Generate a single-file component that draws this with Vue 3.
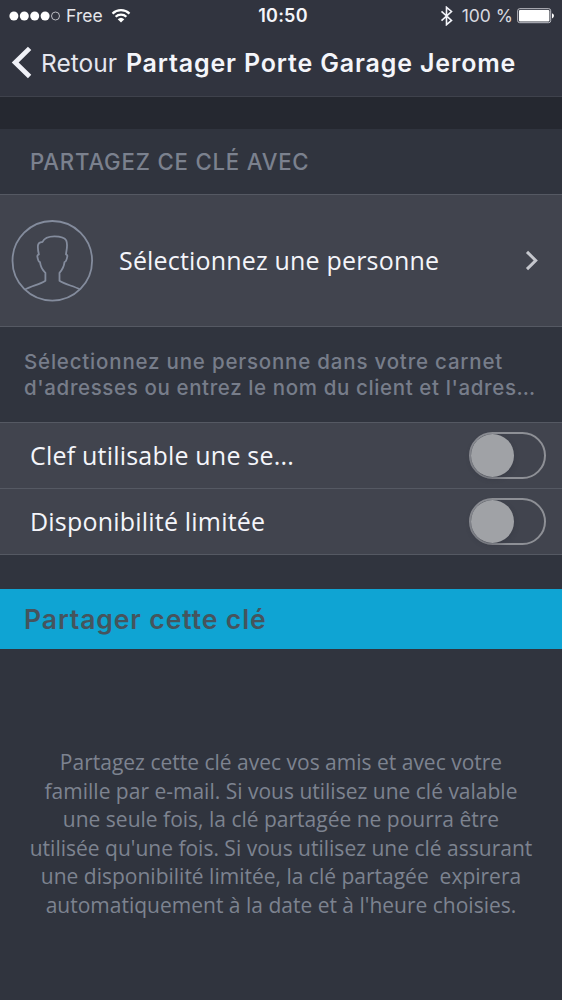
<script setup>
import { ref } from 'vue'

const dots = [true, true, true, true, false]
const options = ref([
  { label: 'Clef utilisable une se...', cls: 'first', on: false },
  { label: 'Disponibilité limitée', cls: 'second', on: false },
])
const infoLines = [
  'Partagez cette clé avec vos amis et avec votre',
  'famille par e-mail. Si vous utilisez une clé valable',
  'une seule fois, la clé partagée ne pourra être',
  "utilisée qu'une fois. Si vous utilisez une clé assurant",
  'une disponibilité limitée, la clé partagée\u00a0 expirera',
  "automatiquement à la date et à l'heure choisies.",
]
</script>

<template>
  <main class="screen">
    <header class="top">
      <div class="status">
        <div class="carrier">
          <svg class="signal" width="52" height="12" viewBox="0 0 52 12">
            <circle v-for="(full, i) in dots" :key="i" :cx="4.9 + i * 10.4" cy="6" :r="full ? 4.5 : 4" :class="full ? 'dot' : 'ring'" />
          </svg>
          <span class="network">Free</span>
          <svg class="wifi" width="20" height="16" viewBox="0 0 20 16">
            <path d="M1.5 5.6a12.3 12.3 0 0 1 17 0M4.6 8.7a7.8 7.8 0 0 1 10.8 0" />
            <path class="wedge" d="M6.7 11.2a4.9 4.9 0 0 1 6.6 0L10 14.6z" />
          </svg>
        </div>
        <span class="clock">10:50</span>
        <div class="power">
          <svg class="bluetooth" width="14" height="20" viewBox="0 0 14 20">
            <path d="M1.5 5.3l10 9.1-5 4.3V1.3l5 4.2-10 9.2" />
          </svg>
          <span class="percent">100 %</span>
          <svg class="battery" width="38" height="16" viewBox="0 0 38 16">
            <rect class="case" x=".7" y=".7" width="33" height="14" rx="2" />
            <rect class="charge" x="2" y="2" width="30.4" height="11.4" rx="1" />
            <path class="charge" d="M35 5.2q2 .8 2 2.6t-2 2.6z" />
          </svg>
        </div>
      </div>
      <nav class="nav">
        <svg class="back-icon" width="21" height="34" viewBox="0 0 21 34">
          <path d="M18.6 2.4L4.2 16.6l14.4 13.8" />
        </svg>
        <span class="back">Retour</span>
        <h1 class="title">Partager Porte Garage Jerome</h1>
      </nav>
    </header>
    <div class="band"></div>
    <h2 class="section">PARTAGEZ CE CLÉ AVEC</h2>
    <div class="person">
      <svg class="avatar" width="82" height="82" viewBox="0 0 82 82">
        <circle cx="41.3" cy="40.8" r="39.8" />
        <path d="M14.4 69.3C20 66 29.5 64.3 34.4 60.8V52.8C31.6 50.3 29.5 46.8 29 42.2C27.6 41.8 26.8 39.5 26.4 36.9C26.1 35.4 26.7 34.7 27.9 34.4C27 31 26.6 28.3 27 25.2C27.5 22.4 29.4 22.6 31.5 21.9C33.5 17.5 38.2 16.3 43.5 16.3C49.7 16.3 53.6 17.3 55.2 20.4C57.2 25 55.4 29.8 55 34.4C56.1 34.8 56.6 35.6 56.2 36.9C55.7 39.5 54.9 41.8 53.5 42.2C53 46.8 50.9 50.3 48.5 52.8V60.8C53.4 64.3 62.8 66 68.8 69.3" />
      </svg>
      <span class="person-label">Sélectionnez une personne</span>
      <svg class="chevron" width="14" height="22" viewBox="0 0 14 22">
        <path d="M2 1.9l8.7 8.6L2 19.1" />
      </svg>
    </div>
    <div class="note">
      <div class="note-a">Sélectionnez une personne dans votre carnet</div>
      <div class="note-b">d'adresses ou entrez le nom du client et l'adres…</div>
    </div>
    <div v-for="option in options" :key="option.cls" class="option">
      <span class="option-label" :class="option.cls">{{ option.label }}</span>
      <button class="toggle" :class="{ on: option.on }" :aria-label="option.label" @click="option.on = !option.on">
        <span class="knob"></span>
      </button>
    </div>
    <button class="share"><span>Partager cette clé</span></button>
    <div class="info">
      <div v-for="line in infoLines" :key="line">{{ line }}</div>
    </div>
  </main>
</template>

<style>
html, body { background: #30343e; }
</style>

<style scoped>
* { box-sizing: border-box; }
.screen {
  width: 562px;
  height: 1000px;
  overflow: hidden;
  background: #30343e;
  font-family: "Open Sans", "Noto Sans", sans-serif;
  color: #f4f5fa;
}
svg { flex: none; fill: none; display: block; }
span, h1 { white-space: nowrap; }
.top { height: 97px; background: #31343f; border-bottom: 1px solid #3f424c; }
.status {
  height: 31px;
  display: grid;
  grid-template-columns: 1fr auto 1fr;
  align-items: center;
  padding: 0 8px 0 9px;
  font-family: Inter, sans-serif;
}
.carrier, .power { display: flex; align-items: center; }
.power { justify-content: flex-end; }
.dot { fill: #fff; }
.ring { stroke: #c9cbd1; stroke-width: .9; }
.network { font-size: 17.5px; margin-left: 5px; color: #e4e5ea; letter-spacing: .1px; }
.wifi { margin-left: 8px; }
.wifi path { stroke: #fff; stroke-width: 2.2; }
.wifi .wedge { fill: #fff; stroke: none; }
.clock { font-size: 18px; font-weight: 600; letter-spacing: .2px; padding-left: 3px; }
.bluetooth { margin-right: 8px; }
.bluetooth path { stroke: #f4f5fa; stroke-width: 1.6; }
.percent { font-size: 17.5px; margin-right: 4px; color: #d9dae0; }
.battery { margin-right: -1px; }
.case { stroke: #bfc1c7; stroke-width: 1; }
.charge { fill: #fff; }
.nav { display: flex; align-items: center; height: 65px; padding: 0 0 2px 11px; }
.back-icon path { stroke: #f0f1f7; stroke-width: 4.8; }
.back { font-family: Inter, sans-serif; font-size: 24.5px; margin-left: 9px; color: #e6e7ef; }
.title { font-family: Inter, sans-serif; font-size: 25px; font-weight: 600; margin: 0 0 0 9px; letter-spacing: .84px; }
.band { height: 32px; background: #252830; }
.section {
  height: 65px;
  line-height: 66px;
  margin: 0;
  padding-left: 30px;
  font-family: Inter, sans-serif;
  font-size: 22.2px;
  font-weight: 500;
  letter-spacing: .8px;
  color: #7b818e;
}
.person {
  height: 133px;
  display: flex;
  align-items: center;
  padding: 0 23px 0 11px;
  background: #41444e;
  border-top: 1px solid #555963;
  border-bottom: 1px solid #555963;
}
.avatar { stroke: #848c9d; stroke-width: 1.8; stroke-linejoin: round; }
.person-label { font-size: 25px; margin-left: 26px; padding-bottom: 2px; letter-spacing: .18px; }
.chevron { margin-left: auto; stroke: #c5c7cd; stroke-width: 3; }
.note {
  height: 95px;
  padding: 22px 0 0 24px;
  font-family: Inter, sans-serif;
  font-size: 20.5px;
  font-weight: 500;
  line-height: 25.5px;
  color: #777d8a;
  white-space: nowrap;
}
.note div { width: max-content; }
.note-a { letter-spacing: .8px; }
.note-b { letter-spacing: .62px; }
.option {
  height: 66px;
  display: flex;
  align-items: center;
  justify-content: space-between;
  padding: 0 16px 0 30px;
  background: #41444e;
  border-top: 1px solid #555963;
}
.option-label { font-size: 25px; padding-bottom: 2px; letter-spacing: .2px; }
.toggle {
  width: 77px;
  height: 47px;
  padding: 0;
  display: flex;
  align-items: center;
  border: 2px solid #8e9096;
  border-radius: 24px;
  background: transparent;
}
.toggle.on { justify-content: flex-end; }
.knob { width: 43px; height: 43px; border-radius: 50%; background: #a0a2a6; box-shadow: 0 2px 5px #30333c66; }
.share {
  display: flex;
  align-items: center;
  width: 100%;
  height: 60px;
  margin-top: 35px;
  padding: 0 0 0 24px;
  border: 0;
  background: #0fa4d3;
  color: #46545d;
  font-family: Inter, sans-serif;
  font-size: 26.5px;
  font-weight: 600;
  letter-spacing: .9px;
  position: relative;
}
.share::before {
  content: "";
  position: absolute;
  left: 0;
  right: 0;
  top: -35px;
  height: 1px;
  background: #555963;
}
.info {
  margin-top: 99px;
  text-align: center;
  font-size: 21px;
  line-height: 28.6px;
  color: #7d8390;
  white-space: nowrap;
}
</style>
